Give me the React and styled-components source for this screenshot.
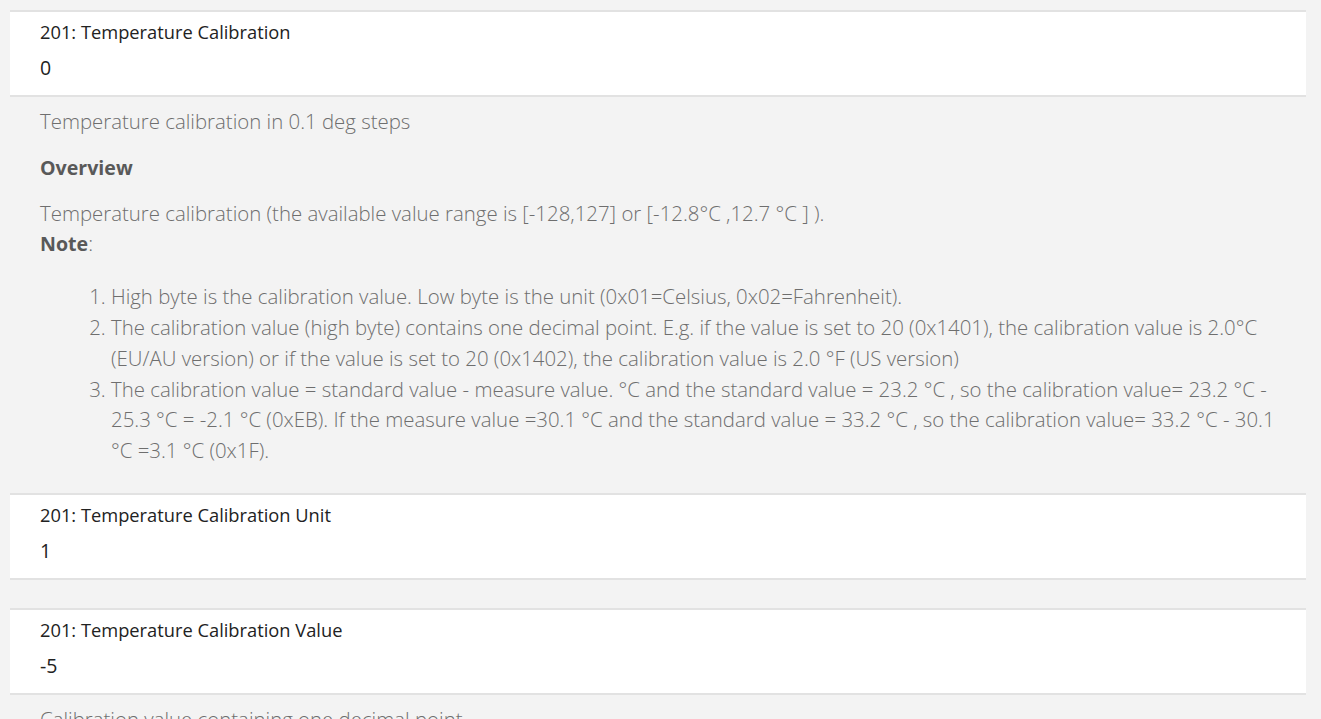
import styled, { createGlobalStyle } from "styled-components"

const GlobalStyle = createGlobalStyle`
    body {
        margin: 0;
        background: #f3f3f3;
        font-family: "Open Sans", "Noto Sans", sans-serif;
    }
`

const Page = styled.div`
    padding: 10px 15px 0 10px;
    height: 719px;
    overflow: hidden;
    box-sizing: border-box;
`

const Card = styled.div`
    background: #ffffff;
    border-top: 2px solid #e2e2e2;
    border-bottom: 2px solid #e2e2e2;
    padding: 8px 30px 14px;
    margin-top: ${props => props.gap || "0px"};
`

const Title = styled.div`
    font-size: 18.3px;
    line-height: 24px;
    color: #222222;
`

const Value = styled.div`
    font-size: 19.5px;
    line-height: 26px;
    margin-top: 11px;
    color: #222222;
`

const Details = styled.div`
    padding: 9px 12px 27px 30px;
    color: #6e6e6e;
    font-size: 20.4px;
    font-weight: 300;
    line-height: 30.8px;
`

const Para = styled.p`
    margin: 0 0 ${props => props.after || "0px"};
`

const Heading = styled.p`
    margin: 0 0 14px;
    font-size: 19.6px;
    font-weight: 700;
    color: #595959;
`

const Strong = styled.b`
    font-size: 19.6px;
    font-weight: 700;
    color: #595959;
`

const List = styled.ol`
    margin: 21px 0 0;
    padding-left: 71px;
`

const App = () => {
    return (
        <Page>
            <GlobalStyle />
            <Card>
                <Title>201: Temperature Calibration</Title>
                <Value>0</Value>
            </Card>
            <Details>
                <Para after="16px">Temperature calibration in 0.1 deg steps</Para>
                <Heading>Overview</Heading>
                <Para>Temperature calibration (the available value range is [-128,127] or [-12.8°C ,12.7 °C ] ).</Para>
                <Para><Strong>Note</Strong>:</Para>
                <List>
                    <li>High byte is the calibration value. Low byte is the unit (0x01=Celsius, 0x02=Fahrenheit).</li>
                    <li>The calibration value (high byte) contains one decimal point. E.g. if the value is set to 20 (0x1401), the calibration value is 2.0°C (EU/AU version) or if the value is set to 20 (0x1402), the calibration value is 2.0 °F (US version)</li>
                    <li>The calibration value = standard value - measure value. °C and the standard value = 23.2 °C , so the calibration value= 23.2 °C - 25.3 °C = -2.1 °C (0xEB). If the measure value =30.1 °C and the standard value = 33.2 °C , so the calibration value= 33.2 °C - 30.1 °C =3.1 °C (0x1F).</li>
                </List>
            </Details>
            <Card>
                <Title>201: Temperature Calibration Unit</Title>
                <Value>1</Value>
            </Card>
            <Card gap="28px">
                <Title>201: Temperature Calibration Value</Title>
                <Value>-5</Value>
            </Card>
            <Details>
                <Para>Calibration value containing one decimal point</Para>
            </Details>
        </Page>
    )
}

export default App
